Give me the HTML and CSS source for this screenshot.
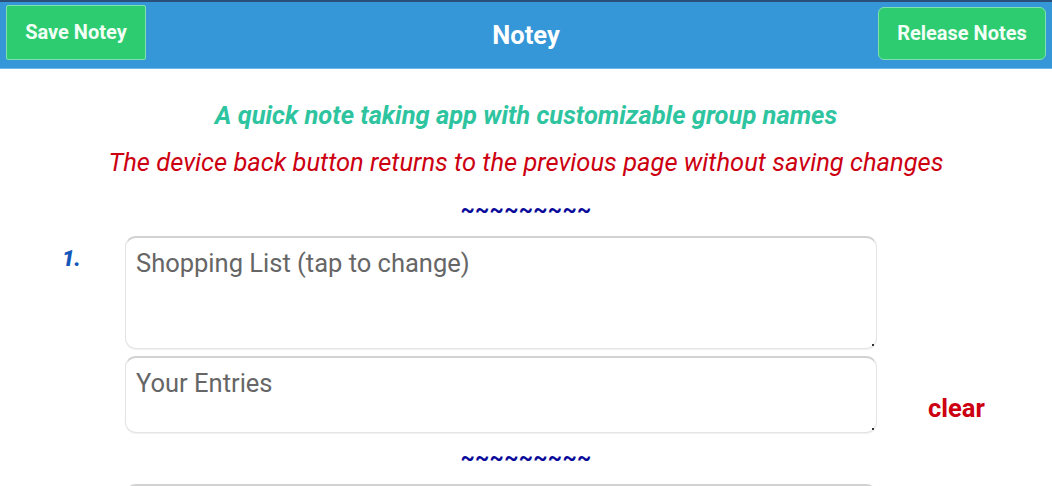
FILE: index.html
```html
<!DOCTYPE html>
<html>
<head>
<meta charset="utf-8">
<link rel="stylesheet" href="styles.css">
</head>
<body>
<header class="topbar">
  <button class="btn btn-save">Save Notey</button>
  <h1 class="title">Notey</h1>
  <button class="btn btn-release">Release Notes</button>
</header>
<main class="content">
  <p class="tagline">A quick note taking app with customizable group names</p>
  <p class="warning">The device back button returns to the previous page without saving changes</p>
  <div class="divider divider-first">~~~~~~~~~</div>
  <section class="group">
    <div class="num">1.</div>
    <div class="fields">
      <div class="field field-name"><span class="ph">Shopping List (tap to change)</span></div>
      <div class="field field-entries"><span class="ph">Your Entries</span></div>
    </div>
    <div class="side"><span class="clear">clear</span></div>
  </section>
  <div class="divider divider-next">~~~~~~~~~</div>
  <section class="group group-next">
    <div class="num"></div>
    <div class="fields">
      <div class="field field-name"><span class="ph"></span></div>
    </div>
    <div class="side"></div>
  </section>
</main>
</body>
</html>
```
FILE: styles.css
```css
html, body {
  margin: 0;
  padding: 0;
  background: #ffffff;
  font-family: Roboto, "Liberation Sans", sans-serif;
  overflow: hidden;
}
.topbar {
  height: 69px;
  background: #3596d8;
  border-top: 2px solid #2a4f78;
  border-bottom: 1px solid #6fb6ea;
  display: grid;
  grid-template-columns: 1fr auto 1fr;
  align-items: center;
  padding: 0 6px;
  box-sizing: border-box;
}
.btn {
  background: #2ecc71;
  color: #f2fff6;
  font-family: Roboto, "Liberation Sans", sans-serif;
  font-weight: bold;
  font-size: 20px;
  border: 1px solid #7fe0b0;
  padding: 0;
  cursor: pointer;
}
.btn-save {
  justify-self: start;
  width: 140px;
  height: 55px;
  border-radius: 2px;
  margin-top: -6px;
}
.btn-release {
  justify-self: end;
  width: 168px;
  height: 53px;
  border-radius: 6px;
  margin-top: -4px;
}
.title {
  margin: 0;
  color: #ffffff;
  font-size: 25.5px;
  font-weight: bold;
  margin-top: -1px;
}
.content {
  display: flex;
  flex-direction: column;
  align-items: center;
}
.tagline {
  margin: 31px 0 0;
  color: #2ec4a0;
  font-style: italic;
  font-weight: bold;
  font-size: 25.5px;
  line-height: 30px;
}
.warning {
  margin: 17px 0 0;
  color: #cc0011;
  font-style: italic;
  font-size: 25.5px;
  line-height: 30px;
}
.divider {
  color: #0a0a9a;
  font-weight: bold;
  font-size: 22px;
  line-height: 24px;
  letter-spacing: 0.3px;
}
.divider-first { margin-top: 21px; }
.divider-next { margin-top: 13px; }
.group {
  align-self: stretch;
  display: grid;
  grid-template-columns: 125px 752px 1fr;
  margin-top: 14px;
}
.group-next { margin-top: 14px; }
.num {
  justify-self: start;
  padding-left: 62px;
  padding-top: 10px;
  color: #1457b8;
  font-weight: 900;
  font-style: italic;
  font-size: 22px;
  line-height: 26px;
}
.fields {
  display: flex;
  flex-direction: column;
  gap: 7px;
}
.field {
  position: relative;
  border: 1px solid #e4e4e4;
  border-top: 2px solid #d2d2d2;
  border-radius: 11px;
  box-shadow: 0 1px 1px rgba(0,0,0,0.06);
  padding: 10px 10px;
  box-sizing: border-box;
}
.field::after {
  content: "";
  position: absolute;
  right: 2px;
  bottom: 2px;
  width: 2px;
  height: 2px;
  background: #333;
}
.field-name { height: 113px; }
.field-entries { height: 77px; }
.ph {
  color: #666666;
  font-size: 25.5px;
  line-height: 30px;
}
.side {
  display: flex;
  align-items: flex-end;
  padding-left: 51px;
  padding-bottom: 10px;
}
.clear {
  color: #cc0011;
  font-weight: bold;
  font-size: 25.5px;
  line-height: 30px;
}
```
